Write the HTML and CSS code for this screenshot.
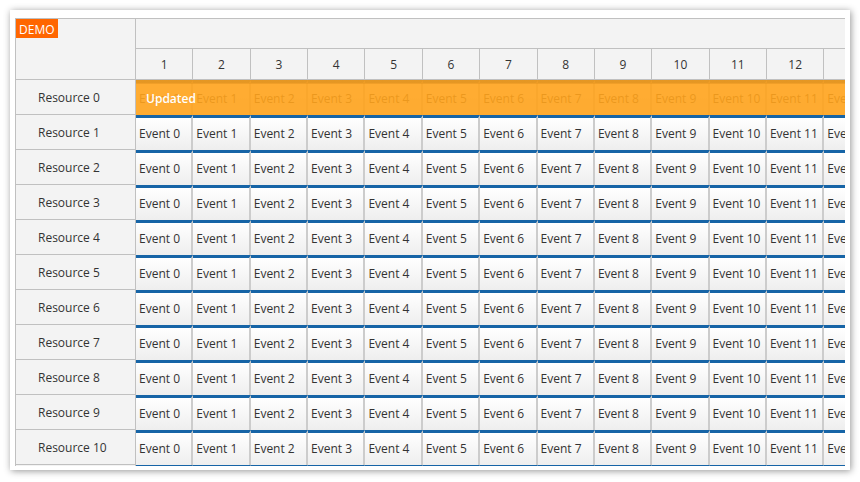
FILE: index.html
```html
<!DOCTYPE html>
<html>
<head>
<meta charset="utf-8">
<link rel="stylesheet" href="styles.css">
</head>
<body>
<div class="frame">
  <div class="scheduler">
    <div class="corner"><span class="demo">DEMO</span></div>
    <div class="timeheader">
      <div class="th-top"></div>
      <div class="th-cols">
        <div class="th-cell">1</div><div class="th-cell">2</div><div class="th-cell">3</div><div class="th-cell">4</div>
        <div class="th-cell">5</div><div class="th-cell">6</div><div class="th-cell">7</div><div class="th-cell">8</div>
        <div class="th-cell">9</div><div class="th-cell">10</div><div class="th-cell">11</div><div class="th-cell">12</div>
        <div class="th-cell">13</div><div class="th-cell">14</div>
      </div>
    </div>
    <div class="rowheaders" id="rowheaders"></div>
    <div class="events" id="events">
      <div class="overlay">Updated</div>
    </div>
  </div>
</div>
<script src="app.js"></script>
</body>
</html>
```
FILE: app.js
```js
(function () {
  var rh = document.getElementById('rowheaders');
  var ev = document.getElementById('events');
  for (var r = 0; r < 12; r++) {
    var h = document.createElement('div');
    h.className = 'rh-cell';
    h.textContent = 'Resource ' + r;
    rh.appendChild(h);
    var row = document.createElement('div');
    row.className = 'ev-row';
    for (var i = 0; i < 14; i++) {
      var e = document.createElement('div');
      e.className = 'event';
      e.textContent = 'Event ' + i;
      row.appendChild(e);
    }
    ev.appendChild(row);
  }
})();
```
FILE: styles.css
```css
html, body {
  margin: 0;
  padding: 0;
  background: #ffffff;
}
body {
  font-family: "Open Sans", "Noto Sans", sans-serif;
  font-size: 12px;
  color: #333333;
}
.frame {
  margin: 10px;
  width: 840px;
  height: 460px;
  background: #ffffff;
  box-shadow: 1px 1px 7px rgba(0, 0, 0, 0.42);
  padding: 8px 0 0 5px;
  box-sizing: border-box;
}
.scheduler {
  width: 830px;
  height: 448px;
  border-left: 1px solid #c0c0c0;
  border-top: 1px solid #c0c0c0;
  box-sizing: border-box;
  overflow: hidden;
  display: grid;
  grid-template-columns: 120px 1fr;
  grid-template-rows: 61px 1fr;
  background: #ffffff;
}
.corner {
  background: #f3f3f3;
  border-right: 1px solid #c0c0c0;
  border-bottom: 1px solid #c0c0c0;
}
.demo {
  display: inline-block;
  background: #ff6600;
  color: #ffffff;
  font-size: 12px;
  line-height: 19px;
  height: 19px;
  padding: 1px 3px 0 3px;
  box-sizing: border-box;
}
.timeheader {
  background: #f3f3f3;
  overflow: hidden;
}
.th-top {
  height: 29px;
  border-bottom: 1px solid #c0c0c0;
}
.th-cols {
  display: flex;
  height: 31px;
  border-bottom: 1px solid #c0c0c0;
  box-sizing: border-box;
}
.th-cell {
  flex: none;
  width: 57.36px;
  box-sizing: border-box;
  border-right: 1px solid #c0c0c0;
  text-align: center;
  padding-top: 2px;
  line-height: 28px;
  color: #333333;
}
.rowheaders {
  background: #f3f3f3;
  border-right: 1px solid #c0c0c0;
}
.rh-cell {
  height: 35px;
  box-sizing: border-box;
  border-bottom: 1px solid #c0c0c0;
  padding-left: 22px;
  padding-top: 2px;
  line-height: 32px;
  white-space: nowrap;
}
.events {
  position: relative;
  overflow: hidden;
}
.ev-row {
  display: flex;
  height: 35px;
}
.event {
  flex: none;
  width: 57.36px;
  height: 35px;
  box-sizing: border-box;
  border-top: 3px solid #1664a6;
  border-right: 2px solid #cccccc;
  background: linear-gradient(to bottom, #ffffff 0%, #eeeeee 100%);
  padding-left: 3px;
  line-height: 31px;
  white-space: nowrap;
  overflow: hidden;
  color: #333333;
}
.overlay {
  position: absolute;
  left: 0;
  top: 0;
  right: 0;
  height: 35px;
  box-sizing: border-box;
  background:
    linear-gradient(to bottom, rgba(225, 145, 30, 0.5) 0, rgba(225, 145, 30, 0.5) 4px, transparent 4px),
    rgba(255, 163, 28, 0.9);
  color: #ffffff;
  font-weight: 600;
  padding-left: 10px;
  line-height: 37px;
}
```
